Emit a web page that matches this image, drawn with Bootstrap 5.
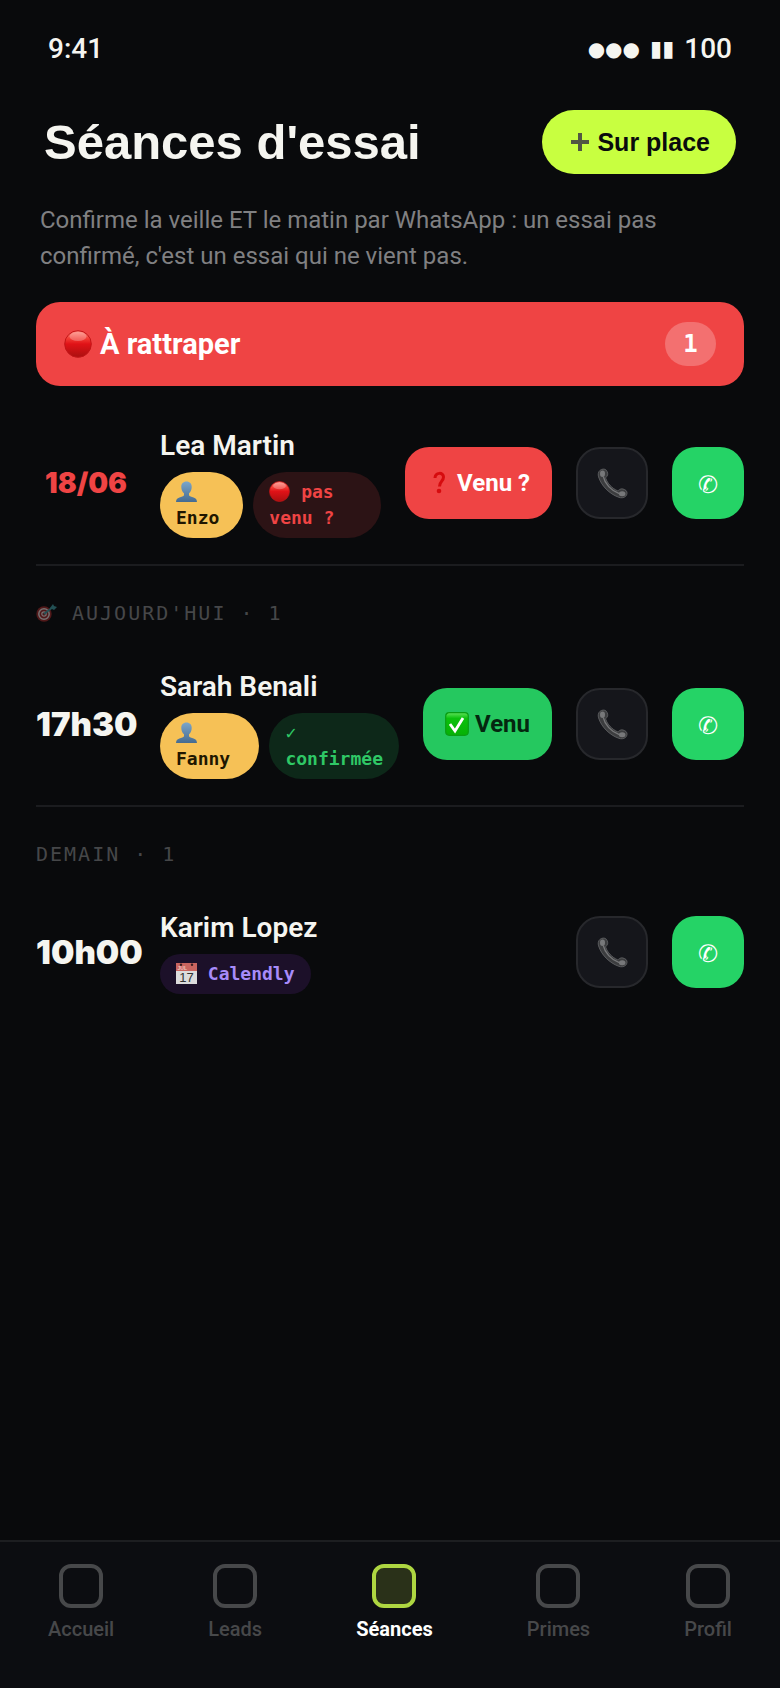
<!DOCTYPE html>
<html lang="fr">
<head>
<meta charset="utf-8">
<meta name="viewport" content="width=device-width, initial-scale=1">
<title>Séances d'essai</title>
<link href="https://cdn.jsdelivr.net/npm/bootstrap@5.3.0/dist/css/bootstrap.min.css" rel="stylesheet">
<style>
body{background:#090a0c;color:#f5f5f0;font-family:Roboto,"Liberation Sans",sans-serif;font-size:28px;line-height:36px}
a{color:inherit;text-decoration:none}
svg{display:block;flex:none}
.head-font{font-family:"Liberation Sans",Arial,sans-serif;font-weight:700}
.mono{font-family:"DejaVu Sans Mono",monospace}
.glyph{font-family:"DejaVu Sans",sans-serif}
.status{padding:31px 48px 0;font-weight:500}
.status-icons{gap:10px}
.dots{font-size:20px}
.bars{font-size:22px}
.heading{padding:43px 44px 0}
.heading h1{font-size:49px;line-height:64px}
.add-btn{height:64px;padding:0 26px 0 28px;background:#c8ff40;color:#0a0b0d;font-size:25px;border:0;gap:7px}
.main-pad{padding:0 36px}
.intro{margin:28px 4px 28px;font-size:24px;color:#808082}
.late{height:84px;padding:0 28px;border-radius:24px;background:#ef4444;color:#fff;font-weight:700;margin-bottom:16px;gap:8px;font-size:29px}
.count{background:#f37070;border-radius:22px;height:44px;width:51px;font-size:24px}
.session{padding:26px 0;gap:24px;border-bottom:2px solid #1b1c1f}
.session.last{border-bottom:0}
.who{min-width:0}
.time{width:100px;flex:none;font-family:Inter,sans-serif;font-weight:900;font-size:33px;white-space:nowrap}
.time.past{font-size:28px;color:#ef4444}
.name{font-size:28px;line-height:36px;font-weight:600;margin:0 0 8px}
.tag-row{gap:10px}
.tag{padding:7px 16px;border-radius:33px;font-size:18px;line-height:26px;font-weight:700}
.tag svg{display:inline-block;vertical-align:-4px}
.coach{background:#f6c156;color:#201600}
.missed{background:#2c1315;color:#ef4444}
.confirmed{background:#0d2819;color:#2fc866}
.calendly{background:#1c1029;color:#a78bfa}
.act{height:72px;border-radius:24px;border:0;flex:none;font-size:24px;font-weight:700;line-height:32px;padding:0}
.wide{padding:0 22px;gap:6px}
.red{background:#ef4444;color:#fff}
.green{background:#25c85f;color:#04270f}
.square{width:72px}
.call{background:#15161b;border:2px solid #27282c}
.whats{background:#25d366;color:#fff;padding-top:4px}
.day{margin:0;padding:33px 0 16px;font-size:20px;line-height:28px;font-weight:400;letter-spacing:2px;color:#464749;gap:14px}
.tabs{background:#0c0d11;border-top:2px solid #1d1e21;padding:22px 48px 45px;font-size:20px;line-height:28px;font-weight:500;color:#47484a}
.tabs a{gap:7px}
.tab-box{width:44px;height:44px;border:4px solid #47484a;border-radius:12px}
.active{color:#fff;font-weight:700}
.active .tab-box{border-color:#aed641;background:#2a3119}
</style>
<script src="https://cdn.jsdelivr.net/npm/bootstrap@5.3.0/dist/js/bootstrap.bundle.min.js"></script>
</head>
<body>
<svg width="0" height="0" class="position-absolute" aria-hidden="true">
<defs>
<linearGradient id="ball" x1="0" y1="0" x2="0" y2="1"><stop offset="0" stop-color="#ff8a7d"/><stop offset=".3" stop-color="#f23a33"/><stop offset=".5" stop-color="#e01217"/><stop offset="1" stop-color="#ab1010"/></linearGradient>
<linearGradient id="bust" x1="0" y1="0" x2="0" y2="1"><stop offset="0" stop-color="#7ba6ca"/><stop offset="1" stop-color="#456b91"/></linearGradient>
<linearGradient id="check" x1="0" y1="0" x2="0" y2="1"><stop offset="0" stop-color="#5fe25a"/><stop offset=".25" stop-color="#0bc10d"/><stop offset="1" stop-color="#06b106"/></linearGradient>
<symbol id="i-ball" viewBox="0 0 28 28"><circle cx="14" cy="14" r="13.3" fill="url(#ball)" stroke="#c21518" stroke-width="1"/><ellipse cx="14" cy="6.5" rx="8.5" ry="4.5" fill="#fff" opacity=".25"/></symbol>
<symbol id="i-bust" viewBox="0 0 21 21"><path d="M10.500 0.500c3.400 0 5.300 2.300 5.200 5.400c0 2.900-1.200 5.200-2.700 6.300v2c.5 1.300 2.500 1.600 4.600 2.300c2.300.8 3.200 1.800 3.400 4.500H0c.2-2.700 1.100-3.700 3.400-4.500c2.100-.7 4.100-1 4.600-2.300v-2C6.500 11.100 5.300 8.800 5.300 5.900C5.200 2.800 7.100.5 10.500.5z" fill="url(#bust)"/></symbol>
<symbol id="i-phone" viewBox="0 0 32 32"><path d="M3 2.500C5 .8 8 .6 9.500 2.200c1.600 1.800 2.200 4.600.8 6.300c-.6.800-1.400 1.300-1.200 2.200c1.500 5 6.500 10.300 11.800 12.700c1 .3 1.600-.6 2.500-1.300c1.800-1.200 4.800-.4 6.600 1.200c1.600 1.500 1.200 4.300-.4 5.900c-1.600 1.500-4.500 2-7 1.100C12.600 26.700 4.500 18.300 1.600 9.200C.9 6.700 1.200 4 3 2.500z" fill="#3c3d3f" stroke="#66676a" stroke-width=".8"/><path d="M6.500 9c1.500 7 8 14.500 16.500 17.500" fill="none" stroke="#77787a" stroke-width="1.400"/><ellipse cx="5.700" cy="6" rx="2.600" ry="3.400" fill="#77787a"/><ellipse cx="26" cy="26.500" rx="3.400" ry="2.600" fill="#77787a"/></symbol>
</defs>
</svg>
<div class="min-vh-100 d-flex flex-column">
<div class="status d-flex justify-content-between"><span>9:41</span><span class="status-icons d-flex align-items-center"><span class="glyph dots">●●●</span><span class="glyph bars">▮▮</span><span>100</span></span></div>
<header class="heading d-flex justify-content-between align-items-center">
<h1 class="head-font m-0">Séances d'essai</h1>
<button type="button" class="add-btn head-font rounded-pill d-flex align-items-center"><svg width="20" height="20" viewBox="0 0 20 20"><path d="M10 1v18M1 10h18" stroke="#515643" stroke-width="4"/></svg>Sur place</button>
</header>
<main class="main-pad">
<p class="intro">Confirme la veille ET le matin par WhatsApp : un essai pas confirmé, c'est un essai qui ne vient pas.</p>
<div class="late d-flex align-items-center"><svg width="28" height="28"><use href="#i-ball"/></svg>À rattraper<span class="count mono d-flex align-items-center justify-content-center ms-auto">1</span></div>

<article class="session d-flex align-items-center">
<div class="time past text-center">18/06</div>
<div class="who flex-fill"><h2 class="name">Lea Martin</h2>
<div class="d-flex mono tag-row"><span class="tag coach"><svg width="21" height="21"><use href="#i-bust"/></svg> Enzo</span><span class="tag missed"><svg width="21" height="21"><use href="#i-ball"/></svg> pas venu ?</span></div></div>
<button type="button" class="act wide red d-flex align-items-center"><svg width="24" height="24" viewBox="0 0 24 24"><path d="M8 7c.3-6 8.500-6 8.500-1c0 4.500-4 4-4 9.500" fill="none" stroke="#d60b0e" stroke-width="3"/><circle cx="12" cy="20" r="2.300" fill="#d60b0e"/></svg>Venu ?</button>
<button type="button" class="act square call d-flex align-items-center justify-content-center" aria-label="Appeler"><svg width="31" height="31"><use href="#i-phone"/></svg></button>
<button type="button" class="act square whats glyph fw-normal" aria-label="WhatsApp">✆</button>
</article>

<h3 class="day mono d-flex align-items-center"><svg width="22" height="20" viewBox="0 0 22 20"><circle cx="8" cy="11" r="7.700" fill="#501819"/><circle cx="8" cy="11" r="5.200" fill="none" stroke="#777172" stroke-width="1.500"/><circle cx="8" cy="11" r="2.200" fill="none" stroke="#777172" stroke-width="1.200"/><path d="M8 11l9-7" stroke="#235054" stroke-width="1.800"/><path d="M14 5l3-4l1 2l3 1l-3 3z" fill="#235054"/></svg>AUJOURD'HUI · 1</h3>

<article class="session d-flex align-items-center">
<div class="time text-center">17h30</div>
<div class="who flex-fill"><h2 class="name">Sarah Benali</h2>
<div class="d-flex mono tag-row"><span class="tag coach"><svg width="21" height="21"><use href="#i-bust"/></svg> Fanny</span><span class="tag confirmed">✓ confirmée</span></div></div>
<button type="button" class="act wide green d-flex align-items-center"><svg width="24" height="24" viewBox="0 0 24 24"><rect x=".7" y=".7" width="22.600" height="22.600" rx="3.500" fill="url(#check)" stroke="#0a9e14" stroke-width="1.200"/><path d="M5 12l5 7l8-13" fill="none" stroke="#fff" stroke-width="2.800"/></svg>Venu</button>
<button type="button" class="act square call d-flex align-items-center justify-content-center" aria-label="Appeler"><svg width="31" height="31"><use href="#i-phone"/></svg></button>
<button type="button" class="act square whats glyph fw-normal" aria-label="WhatsApp">✆</button>
</article>

<h3 class="day mono">DEMAIN · 1</h3>

<article class="session last d-flex align-items-center">
<div class="time text-center">10h00</div>
<div class="who flex-fill"><h2 class="name">Karim Lopez</h2>
<div class="d-flex mono tag-row"><span class="tag calendly"><svg width="21" height="21" viewBox="0 0 21 21"><path fill="#dcdcdc" d="M0 0h21v21H0z"/><path fill="#c9655f" d="M0 0h21v8H0z"/><circle cx="5" cy="1.800" r="1.200" fill="#3a2020"/><circle cx="16" cy="1.800" r="1.200" fill="#3a2020"/><text x="1.500" y="7" font-family="Liberation Sans" font-size="5" font-weight="700" fill="#f0c5c2">JUL</text><text x="10.500" y="19" text-anchor="middle" font-family="Liberation Sans" font-size="13" font-weight="400" fill="#333">17</text></svg> Calendly</span></div></div>
<button type="button" class="act square call d-flex align-items-center justify-content-center" aria-label="Appeler"><svg width="31" height="31"><use href="#i-phone"/></svg></button>
<button type="button" class="act square whats glyph fw-normal" aria-label="WhatsApp">✆</button>
</article>
</main>
<nav class="tabs d-flex justify-content-between mt-auto" aria-label="Navigation">
<a href="#" class="d-flex flex-column align-items-center"><span class="tab-box"></span>Accueil</a>
<a href="#" class="d-flex flex-column align-items-center"><span class="tab-box"></span>Leads</a>
<a href="#" class="d-flex flex-column align-items-center active" aria-current="page"><span class="tab-box"></span>Séances</a>
<a href="#" class="d-flex flex-column align-items-center"><span class="tab-box"></span>Primes</a>
<a href="#" class="d-flex flex-column align-items-center"><span class="tab-box"></span>Profil</a>
</nav>
</div>
</body>
</html>
